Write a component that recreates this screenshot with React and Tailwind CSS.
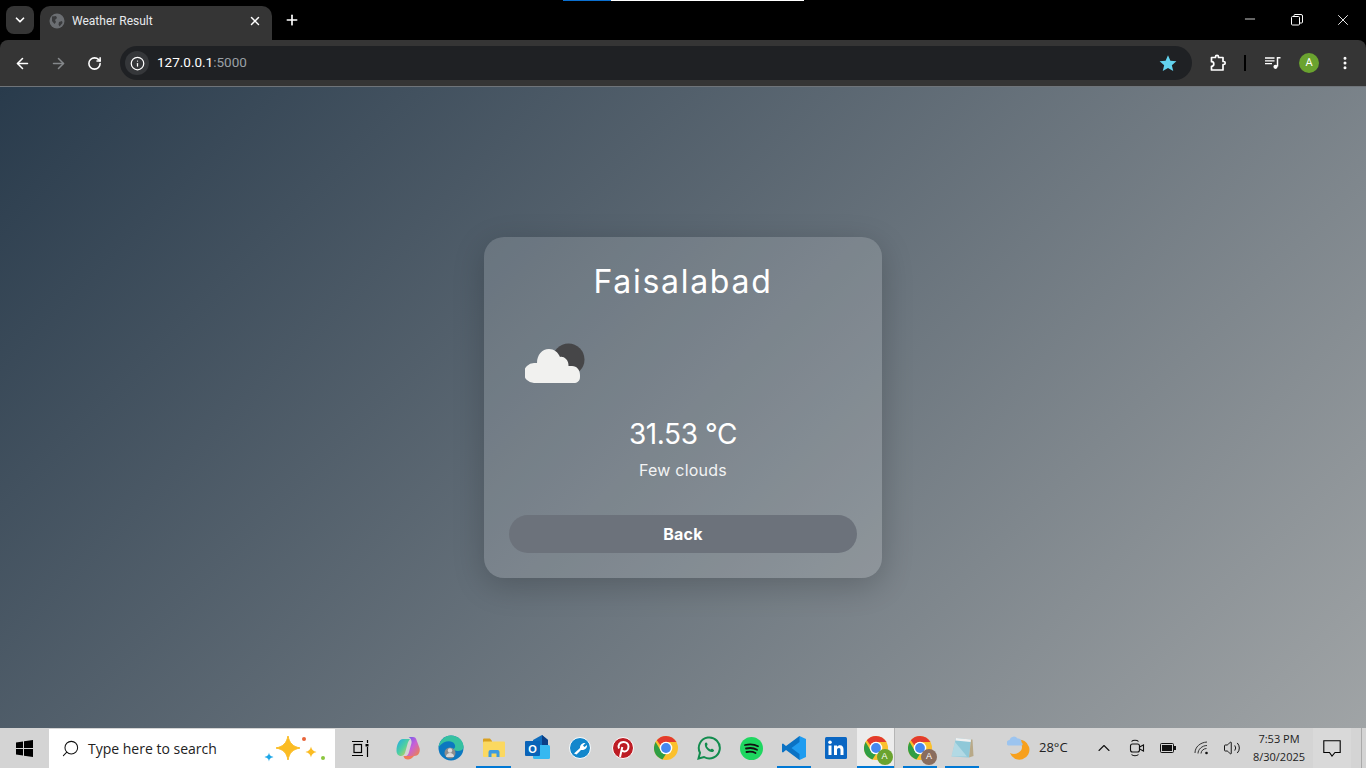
import {
  ArrowLeft,
  ArrowRight,
  ChevronDown,
  ChevronUp,
  Info,
  Minus,
  MoreVertical,
  Plus,
  RotateCw,
  Search,
  Volume2,
  X,
} from "lucide-react";

// Browser window icons
function Globe() {
  return (
    <svg width="16" height="16" viewBox="0 0 16 16">
      <circle cx="8" cy="8" r="7.5" fill="#6b6e72" />
      <path d="M3 3.500 7 3 8 5 6 7 7 9 5.500 11 3 8ZM10 9l3-1 .5 2-3 3.500-1-2Z" fill="#3a3b3d" />
    </svg>
  );
}

function Restore() {
  return (
    <svg width="12" height="12" viewBox="0 0 12 12" fill="none" stroke="#fff" strokeWidth="1">
      <rect x="0.5" y="2.5" width="8" height="8.5" rx="1" />
      <path d="M3 2.500V1.500a1 1 0 0 1 1-1h6a1.500 1.500 0 0 1 1.500 1.500v6a1 1 0 0 1-1 1H8.500" />
    </svg>
  );
}

function Star() {
  return (
    <svg width="18" height="18" viewBox="0 0 24 24" fill="#63d3ee">
      <path d="M12 1.500l3.200 7.400 8 .7-6.100 5.300 1.900 7.900L12 18.500l-7 4.300 1.900-7.900L.8 9.600l8-.7z" />
    </svg>
  );
}

function Puzzle() {
  return (
    <svg width="18" height="18" viewBox="0 0 18 18" fill="none" stroke="#fff" strokeWidth="1.700" strokeLinejoin="round">
      <path d="M2.500 3.500H6.500V2.800a1.500 1.500 0 0 1 3 0V3.500H14V7.500h.7a1.500 1.500 0 0 1 0 3H14V16H2.500V12.300a2.300 2.300 0 0 0 0-4.600Z" />
    </svg>
  );
}

function MediaControl() {
  return (
    <svg width="16" height="12" viewBox="0 0 16 12" fill="none" stroke="#fff" strokeWidth="1.300">
      <path d="M0 1H9.500M0 3.800H9.500M0 6.600H7" />
      <path d="M12.500 9.500V.8H15.500" strokeWidth="1.500" />
      <circle cx="10.500" cy="9.800" r="2.100" fill="#fff" stroke="none" />
    </svg>
  );
}

// Weather icon in the card
function CloudIcon() {
  return (
    <svg width="62" height="44" viewBox="0 0 62 44">
      <circle cx="43.500" cy="17.500" r="16" fill="#464648" />
      <path
        d="M9 41A10 10 0 0 1 9 21H12C12 13 17 7 24 7C29 7 33 10 35 15C37 14.500 39 15 41 17C43 19 43.500 21 43.500 24H47C52 24 55 28 55 33V35C55 39 52 41 49 41Z"
        fill="#f1f1ef"
      />
    </svg>
  );
}

// Taskbar icons
function WindowsLogo() {
  return (
    <svg width="17" height="17" viewBox="0 0 17 17" fill="#000">
      <path d="M0 2.500 7 1.500V8H0ZM8 1.300 17 0V8H8ZM0 9H7V15.500L0 14.500ZM8 9H17V17L8 15.700Z" />
    </svg>
  );
}

function Sparkles() {
  return (
    <svg width="66" height="30" viewBox="0 0 66 30" className="shrink-0">
      <path d="M25 2c1.500 7 4.500 10.500 12 12-7.500 1.500-10.500 4.500-12 12-1.500-7.500-4.500-10.500-12-12 7.500-1.500 10.500-5 12-12Z" fill="#fbbc23" stroke="#fbbc23" strokeLinejoin="round" />
      <path d="M48 12.500c.7 3 1.800 4.500 5.500 5.500-3.700 1-4.800 2.500-5.500 5.500-.7-3-1.800-4.500-5.500-5.500 3.700-1 4.800-2.500 5.500-5.500Z" fill="#fbbc23" />
      <path d="M6 18.500c.4 2.200 1 3.500 4.500 4.500-3.500 1-4.100 2.300-4.500 4.500C5.600 25.300 5 24 1.500 23 5 22 5.600 20.700 6 18.500Z" fill="#1ea7e8" />
      <circle cx="41" cy="5" r="2" fill="#e8643a" />
      <circle cx="60" cy="24" r="2" fill="#8cc63f" />
    </svg>
  );
}

function TaskView() {
  return (
    <svg width="17" height="17" viewBox="0 0 17 17" fill="none" stroke="#000" strokeWidth="1.200">
      <path d="M0 1.500H11M0 15.500H11M15.500 0v3M15.500 7v10" />
      <rect x="2" y="4.500" width="7.500" height="8" />
      <rect x="13.500" y="4" width="3" height="2.500" fill="#000" stroke="none" />
    </svg>
  );
}

function Copilot() {
  return (
    <svg width="24" height="24" viewBox="0 0 24 24">
      <defs>
        <linearGradient id="cpA" x1="0" y1="0" x2="1" y2="1">
          <stop offset="0" stopColor="#1fa8e8" />
          <stop offset="0.5" stopColor="#4fd0a0" />
          <stop offset="1" stopColor="#f4d03f" />
        </linearGradient>
        <linearGradient id="cpB" x1="0" y1="0" x2="1" y2="1">
          <stop offset="0" stopColor="#5a5cf0" />
          <stop offset="0.5" stopColor="#c860d8" />
          <stop offset="1" stopColor="#f0863a" />
        </linearGradient>
      </defs>
      <path d="M7 3h7c-1 1-2 3-2.500 5L9 17c-.7 2-2 3-4 3-3 0-4.500-2.500-4.500-5.500C.5 9 3 3 7 3Z" fill="url(#cpA)" />
      <path d="M12 1h5c2 0 3 1 3.500 3l3 8c1 4-1 8-5 8h-9c2 0 3-2 3.500-4l2.500-9C16 4 14 1 12 1Z" fill="url(#cpB)" />
      <path d="M10 20h8c-2 2.500-4 3.500-6 3.500-2.500 0-4-1-4.500-3.500Z" fill="#f07a5a" />
    </svg>
  );
}

function Edge() {
  return (
    <svg width="26" height="26" viewBox="0 0 26 26">
      <circle cx="13" cy="13" r="12.500" fill="#0c78c0" />
      <path d="M.6 12C1.500 5 7 .5 13 .5c7 0 12.500 5 12.500 11.500 0 3-3 4-6 4-2 0-4-1-4-2 2-1 2-3 1-5C14 5 6 5 .6 12Z" fill="#35c1a0" />
      <circle cx="12" cy="18" r="5.500" fill="#8d8d8d" />
      <circle cx="12" cy="15.500" r="2.200" fill="#d8d8d8" />
      <path d="M8 22c0-3 2-4 4-4s4 1 4 4Z" fill="#d8d8d8" />
    </svg>
  );
}

function Explorer() {
  return (
    <svg width="22" height="20" viewBox="0 0 22 20">
      <path d="M0 1.500a1 1 0 0 1 1-1h6l2 2.500v2H0Z" fill="#d9a020" />
      <rect x="0" y="3.500" width="22" height="15.500" rx="1" fill="#fbd860" />
      <path d="M5.500 19v-5a2 2 0 0 1 2-2h7a2 2 0 0 1 2 2v5h-3v-3.500h-5V19Z" fill="#3d9be0" />
    </svg>
  );
}

function Outlook() {
  return (
    <svg width="26" height="26" viewBox="0 0 26 26">
      <path d="M9 5l9-5 6 5v15H9Z" fill="#0f6cbd" />
      <path d="M18 0l6 5v6h-6Z" fill="#0b3f86" />
      <rect x="9" y="10" width="17" height="14" rx="1.500" fill="#35b8f1" />
      <rect x="1" y="6" width="15" height="15" rx="1" fill="#0a63b8" />
      <text x="8.500" y="18" fontSize="11" fontWeight="700" fill="#fff" textAnchor="middle" fontFamily="Liberation Sans, sans-serif">O</text>
    </svg>
  );
}

function WrenchApp() {
  return (
    <svg width="22" height="22" viewBox="0 0 22 22">
      <circle cx="11" cy="11" r="10.500" fill="#1287cc" stroke="#fff" strokeWidth="1" />
      <path d="M5 16.500 11 11c0-3 2-5.500 5.500-5l-2.500 2.500 1.500 1.500 2.500-2c.5 3.500-3 5.500-6 5l-4.500 4.500Z" fill="#fff" />
    </svg>
  );
}

function Pinterest() {
  return (
    <svg width="22" height="22" viewBox="0 0 22 22">
      <circle cx="11" cy="11" r="10.500" fill="#bd1c24" stroke="#fff" strokeWidth="1" />
      <path d="M8 20l2.300-10M7 11.500C5.500 8 8 5 11.500 5c3 0 5 2 5 4.500 0 3-2 5-4 5-1.200 0-2-.7-2-1.500" fill="none" stroke="#fff" strokeWidth="2" />
    </svg>
  );
}

function Chrome({ badge }) {
  return (
    <div className="relative h-[24px] w-[24px]">
      <svg width="24" height="24" viewBox="0 0 24 24">
        <circle cx="12" cy="12" r="12" fill="#fbc02d" />
        <path d="M12 0a12 12 0 0 1 10.400 6H12a6 6 0 0 0-5.500 3.500L2.800 4.300A12 12 0 0 1 12 0Z" fill="#e33b2e" />
        <path d="M1.600 6 7 15a6 6 0 0 0 5 3l-3.600 5.500A12 12 0 0 1 1.600 6Z" fill="#2f9e44" />
        <circle cx="12" cy="12" r="6.300" fill="#fff" />
        <circle cx="12" cy="12" r="4.900" fill="#4688f1" />
      </svg>
      {badge && (
        <span
          className={`absolute right-[-5px] bottom-[-5px] flex h-[16px] w-[16px] items-center justify-center rounded-full text-[9px] text-white ${badge}`}
        >
          A
        </span>
      )}
    </div>
  );
}

function Whatsapp() {
  return (
    <svg width="24" height="24" viewBox="0 0 24 24">
      <path d="M1.500 22.500 3 16.800A10.500 10.500 0 1 1 7 21Z" fill="none" stroke="#128c4e" strokeWidth="2" />
      <path d="M8 7c1-1 2-.5 2.300.5.300 1 .4 1.500-.5 2.500.7 1.500 2 2.800 3.700 3.500 1-1 1.500-.8 2.500-.3s1.500 1.300.5 2.300c-3 2.500-10-3.500-8.500-8.500Z" fill="#128c4e" />
    </svg>
  );
}

function Spotify() {
  return (
    <svg width="23" height="23" viewBox="0 0 23 23">
      <circle cx="11.500" cy="11.500" r="11.500" fill="#1ed760" />
      <path d="M5 8c4-1 9-1 13 1.300M6 11.500c3.500-.8 8-.5 11 1.200M6.500 15c3-.6 6.500-.4 9 1" fill="none" stroke="#111" strokeWidth="1.800" strokeLinecap="round" />
    </svg>
  );
}

function VsCode() {
  return (
    <svg width="24" height="24" viewBox="0 0 24 24">
      <path d="M17.500 0 24 3v18l-6.500 3L7 13.500Z" fill="#1f9cf0" />
      <path d="M17.500 0v6L9.500 12l8 6v6L4 14l-3 2.500L0 16v-8l1-.5L4 10Z" fill="#0a72c4" />
    </svg>
  );
}

function Linkedin() {
  return (
    <svg width="22" height="22" viewBox="0 0 22 22">
      <rect width="22" height="22" rx="1.500" fill="#0a66c2" />
      <rect x="3.500" y="8.500" width="3" height="9.500" fill="#fff" />
      <circle cx="5" cy="5.300" r="1.800" fill="#fff" />
      <path d="M9 8.500h3v1.300c.6-1 1.800-1.600 3-1.600 2.500 0 3.500 1.600 3.500 4.300V18h-3v-5c0-1.300-.5-2.100-1.600-2.100S12 11.700 12 13v5H9Z" fill="#fff" />
    </svg>
  );
}

function Notepad() {
  return (
    <svg width="24" height="24" viewBox="0 0 24 24">
      <path d="M6 2 21 3.500 19 21.500 1.500 20.500Z" fill="#8fc8d8" />
      <path d="M21 3.500h1.500L23.500 20 19 21.500Z" fill="#b8a988" />
      <path d="M6 2 21 3.500 20.700 6 5.500 4.500Z" fill="#f0f0f0" />
      <path d="M5 6 17 20.500 1.500 20.500Z" fill="#cfe8ee" opacity="0.55" />
    </svg>
  );
}

function WeatherTray() {
  return (
    <svg width="24" height="24" viewBox="0 0 24 24">
      <path d="M10 4a10 10 0 1 1-7 13c5 2.500 12-.5 12-6 0-3-2-5.500-5-7Z" fill="#f7a01d" />
      <path d="M1 9.500a3 3 0 0 1 1.500-5.500 4.500 4.500 0 0 1 8-1.500 3.500 3.500 0 0 1 4 4c1.500.5 1.500 3 0 3Z" fill="#9cc4ef" />
    </svg>
  );
}

function MeetNow() {
  return (
    <svg width="16" height="20" viewBox="0 0 16 20" fill="none" stroke="#111" strokeWidth="1.100">
      <rect x="1.500" y="6" width="9" height="8" rx="2" />
      <path d="M10.500 9 14.500 7v6l-4-2ZM2.500 3.500C4 1.800 8 1.800 9.500 3.500M2.500 16.500C4 18.200 8 18.200 9.500 16.500" />
    </svg>
  );
}

function Battery() {
  return (
    <svg width="16" height="10" viewBox="0 0 16 10">
      <rect x="0.500" y="0.500" width="13" height="9" rx="1" fill="none" stroke="#111" />
      <rect x="2" y="2" width="10" height="6" fill="#111" />
      <rect x="14" y="3" width="2" height="4" fill="#111" />
    </svg>
  );
}

function Wifi() {
  return (
    <svg width="16" height="14" viewBox="0 0 16 14" fill="none" stroke="#333" strokeWidth="1">
      <path d="M1 12C1 6 6 1.500 13 1M4 12.500C4 8.500 8 4.500 13 4.500M7 12.500C7 10 9.500 7.500 12.500 7.500" />
      <circle cx="12.500" cy="12" r="1.300" fill="#111" stroke="none" />
    </svg>
  );
}

function Bubble() {
  return (
    <svg width="18" height="17" viewBox="0 0 18 17" fill="none" stroke="#000" strokeWidth="1.100">
      <path d="M.8 .8H17.200V12.500H12L9 16 6.500 12.500H.8Z" />
    </svg>
  );
}

const pinnedApps = [
  { icon: <Copilot /> },
  { icon: <Edge /> },
  { icon: <Explorer />, running: true },
  { icon: <Outlook /> },
  { icon: <WrenchApp /> },
  { icon: <Pinterest /> },
  { icon: <Chrome /> },
  { icon: <Whatsapp /> },
  { icon: <Spotify /> },
  { icon: <VsCode />, running: true, narrow: true },
  { icon: <Linkedin />, narrow: true },
  { icon: <Chrome badge="bg-[#6aa32f]" />, running: true, active: true },
  { icon: <Chrome badge="bg-[#8a6d5e]" />, running: true, narrow: true },
  { icon: <Notepad />, running: true, narrow: true },
];

function TaskbarSlot({ children, running, active, narrow }) {
  let size = "w-[43px]";
  if (narrow) size = "w-[42px]";
  if (active) size = "mr-[4px] w-[38px] border-r border-r-[#b5b5b5] bg-[#ececec]";

  return (
    <div className={`relative flex h-full items-center justify-center ${size}`}>
      {children}
      {running && <div className={`absolute bottom-0 h-[2px] bg-[#0078d4] ${active ? "inset-x-0" : "inset-x-[4px]"}`} />}
    </div>
  );
}

export default function App() {
  return (
    <div className="relative flex h-screen w-full flex-col overflow-hidden bg-black font-['Liberation_Sans',sans-serif]">
      {/* progress strip at the top of the screen */}
      <div className="absolute top-0 left-[563px] flex h-px">
        <div className="w-[48px] bg-[#0a6fd0]" />
        <div className="w-[193px] bg-white" />
      </div>

      {/* Tab strip */}
      <div className="flex h-[40px] shrink-0 items-end bg-black">
        <div className="mb-[6px] ml-[6px] flex h-[28px] w-[28px] items-center justify-center rounded-lg bg-[#353535]">
          <ChevronDown size={14} strokeWidth={3} color="#fff" />
        </div>
        <div className="ml-[6px] flex h-[34px] w-[232px] items-center rounded-t-[10px] bg-[#353535] pr-[10px] pb-[4px] pl-[9px]">
          <Globe />
          <span className="ml-[7px] flex-1 font-['Roboto',sans-serif] text-[12px] text-[#e8eaed]">Weather Result</span>
          <X size={14} strokeWidth={2.500} color="#fff" />
        </div>
        <div className="mb-[6px] ml-[10px] flex h-[28px] w-[20px] items-center justify-center">
          <Plus size={16} strokeWidth={2.500} color="#fff" />
        </div>
        <div className="flex-1" />
        <div className="mb-[6px] flex h-[28px] items-center text-white">
          <div className="flex w-[46px] justify-center pr-[1px] pb-[2px]">
            <Minus size={16} strokeWidth={1.200} />
          </div>
          <div className="flex w-[46px] justify-center pl-[2px]">
            <Restore />
          </div>
          <div className="flex w-[47px] justify-center">
            <X size={18} strokeWidth={1.200} />
          </div>
        </div>
      </div>

      {/* Toolbar */}
      <div className="flex h-[47px] shrink-0 items-center rounded-t-[8px] border-b border-b-[#6f7479] bg-[#353535] pr-[12px] pl-[14px]">
        <ArrowLeft size={17} strokeWidth={2.200} color="#fff" />
        <ArrowRight size={17} strokeWidth={2.200} color="#85888b" className="ml-[19px]" />
        <RotateCw size={15} strokeWidth={2.500} color="#fff" className="ml-[20px]" />
        <div className="ml-[18px] flex h-[34px] w-[1072px] items-center rounded-full bg-[#1f2124] pr-[15px] pl-[5px]">
          <div className="flex h-[24px] w-[24px] items-center justify-center rounded-full bg-[#35373a]">
            <Info size={15} strokeWidth={2} color="#fff" />
          </div>
          <span className="ml-[8px] flex-1 pb-px font-['Roboto',sans-serif] text-[13.500px] text-white">
            127.0.0.1<span className="text-[#9aa0a6]">:5000</span>
          </span>
          <Star />
        </div>
        <div className="ml-[17px]">
          <Puzzle />
        </div>
        <div className="ml-[17px] h-[16px] w-[2px] bg-black" />
        <div className="ml-[19px]">
          <MediaControl />
        </div>
        <div className="ml-[18px] flex h-[20px] w-[20px] items-center justify-center rounded-full bg-[#6aa32f] font-['Roboto',sans-serif] text-[11px] text-white">
          A
        </div>
        <MoreVertical size={16} strokeWidth={2.500} color="#fff" className="ml-[18px]" />
      </div>

      {/* Page */}
      <main className="flex flex-1 items-center justify-center bg-[linear-gradient(135deg,#293b4c,#a0a4a6)]">
        <div className="flex w-[398px] flex-col rounded-[20px] bg-white/15 px-[25px] pt-[24px] pb-[25px] font-['Inter',sans-serif] text-white shadow-[0_8px_32px_rgba(0,0,0,0.2)]">
          <h1 className="text-center text-[32px] leading-[42px] font-normal tracking-[1.700px]">Faisalabad</h1>
          <div className="mt-[21px] flex h-[80px] items-center">
            <div className="ml-[16px]">
              <CloudIcon />
            </div>
          </div>
          <p className="mt-[12px] text-center text-[28px] leading-[36px] font-normal tracking-[-0.4px]">31.53 °C</p>
          <p className="mt-[6px] text-center text-[16px] leading-[24px] tracking-[0.2px] text-[#f2f3f4]">Few clouds</p>
          <button className="mt-[33px] h-[38px] rounded-full bg-[#6c727b] pb-px text-[16px] font-bold tracking-[0.2px]">Back</button>
        </div>
      </main>

      {/* Windows taskbar */}
      <footer className="flex h-[40px] shrink-0 items-stretch bg-[#d4d4d4] text-black">
        <div className="flex w-[49px] items-center justify-center">
          <WindowsLogo />
        </div>
        <div className="mt-px flex w-[286px] items-center bg-white pr-[6px] pl-[12px]">
          <Search size={19} strokeWidth={1.300} color="#111" className="-scale-x-100" />
          <span className="ml-[8px] flex-1 font-['Open_Sans',sans-serif] text-[14px] text-[#222]">Type here to search</span>
          <Sparkles />
        </div>
        <div className="flex w-[51px] items-center justify-center">
          <TaskView />
        </div>
        <div className="flex flex-1 items-center">
          {pinnedApps.map((app, index) => (
            <TaskbarSlot key={index} running={app.running} active={app.active} narrow={app.narrow}>
              {app.icon}
            </TaskbarSlot>
          ))}
          <div className="ml-[24px] flex items-center gap-[8px]">
            <WeatherTray />
            <span className="font-['Open_Sans',sans-serif] text-[13px] text-[#222]">28°C</span>
          </div>
        </div>
        <div className="flex items-center">
          <ChevronUp size={20} strokeWidth={1.300} color="#111" />
          <div className="ml-[15px]">
            <MeetNow />
          </div>
          <div className="ml-[15px]">
            <Battery />
          </div>
          <div className="ml-[18px]">
            <Wifi />
          </div>
          <Volume2 size={18} strokeWidth={1.300} color="#111" className="ml-[13px]" />
          <div className="ml-[8px] flex w-[60px] flex-col items-center font-['Open_Sans',sans-serif] text-[11px] leading-[18px] text-[#222]">
            <span>7:53 PM</span>
            <span>8/30/2025</span>
          </div>
          <div className="ml-[4px] flex h-full w-[38px] items-center justify-center bg-[#d9d9d9]">
            <Bubble />
          </div>
          <div className="h-full w-[10px]" />
          <div className="h-full w-[5px] border-l border-l-[#aaa]" />
        </div>
      </footer>
    </div>
  );
}
